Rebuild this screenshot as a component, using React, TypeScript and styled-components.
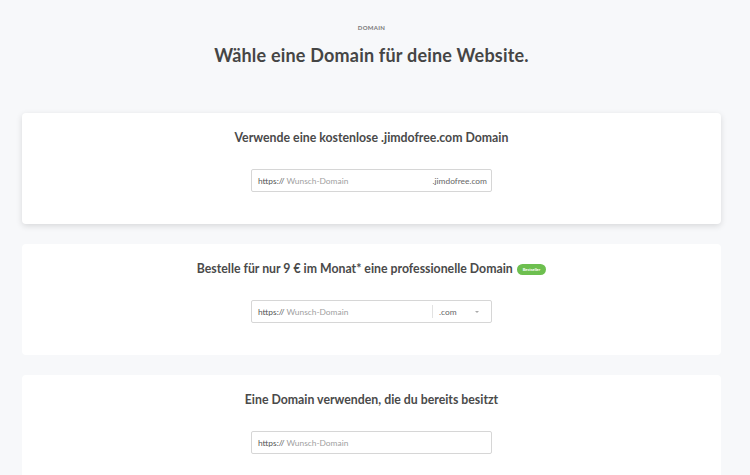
import styled, { createGlobalStyle } from 'styled-components';

const GlobalStyle = createGlobalStyle`
  html, body {
    margin: 0;
    padding: 0;
    background: #f7f8fa;
    font-family: Lato, "Open Sans", sans-serif;
    color: #4a4a4a;
  }
`;

const Page = styled.div`
  padding: 0 29px 0 22px;
  height: 475px;
  overflow: hidden;
`;

const Header = styled.header`
  display: flex;
  flex-direction: column;
  align-items: center;
  padding-top: 24px;
  margin-bottom: 46px;
`;

const Eyebrow = styled.div`
  font-size: 6px;
  font-weight: 700;
  letter-spacing: 0.3px;
  color: #777;
  line-height: 8px;
`;

const Title = styled.h1`
  margin: 11px 0 0;
  font-size: 18px;
  line-height: 24px;
  font-weight: 700;
  color: #454545;
  letter-spacing: 0.2px;
`;

const CardList = styled.div`
  display: flex;
  flex-direction: column;
  gap: 20px;
`;

const Card = styled.section<{ $raised?: boolean }>`
  background: #fff;
  border-radius: 4px;
  padding: 18px 0 32px;
  display: flex;
  flex-direction: column;
  align-items: center;
  box-shadow: ${p => (p.$raised ? '0 2px 6px rgba(0, 0, 0, 0.13)' : 'none')};
`;

const CardTitle = styled.h2`
  margin: 0 0 24px;
  font-size: 12.3px;
  line-height: 14px;
  font-weight: 700;
  color: #4a4a4a;
  display: flex;
  align-items: center;
  gap: 4px;
`;

const Badge = styled.span`
  background: #6dbf4f;
  color: #fff;
  font-size: 4px;
  font-weight: 700;
  border-radius: 6px;
  padding: 0 6px;
  height: 11px;
  line-height: 11px;
  display: inline-block;
`;

const Field = styled.div`
  width: 241px;
  height: 23px;
  box-sizing: border-box;
  border: 1px solid #d6d6d6;
  border-radius: 2px;
  display: flex;
  align-items: center;
  padding: 0 4px 0 6px;
  font-size: 8.4px;
`;

const Prefix = styled.span`
  color: #555;
`;

const Placeholder = styled.span`
  color: #a0a0a0;
  margin-left: 2px;
  flex: 1;
`;

const Suffix = styled.span`
  color: #666;
`;

const Select = styled.div`
  display: flex;
  align-items: center;
  border-left: 1px solid #e2e2e2;
  height: 13px;
  width: 55px;
  padding-left: 6px;
  color: #666;
  justify-content: space-between;
  padding-right: 8px;
  box-sizing: border-box;
`;

const Caret = styled.span`
  width: 0;
  height: 0;
  border-left: 2px solid transparent;
  border-right: 2px solid transparent;
  border-top: 2px solid #aaa;
`;

export default function App() {
  return (
    <>
      <GlobalStyle />
      <Page>
        <Header>
          <Eyebrow>DOMAIN</Eyebrow>
          <Title>Wähle eine Domain für deine Website.</Title>
        </Header>
        <CardList>
          <Card $raised>
            <CardTitle>Verwende eine kostenlose .jimdofree.com Domain</CardTitle>
            <Field>
              <Prefix>https://</Prefix>
              <Placeholder>Wunsch-Domain</Placeholder>
              <Suffix>.jimdofree.com</Suffix>
            </Field>
          </Card>
          <Card>
            <CardTitle>
              Bestelle für nur 9 € im Monat* eine professionelle Domain
              <Badge>Bestseller</Badge>
            </CardTitle>
            <Field>
              <Prefix>https://</Prefix>
              <Placeholder>Wunsch-Domain</Placeholder>
              <Select>
                <span>.com</span>
                <Caret />
              </Select>
            </Field>
          </Card>
          <Card>
            <CardTitle>Eine Domain verwenden, die du bereits besitzt</CardTitle>
            <Field>
              <Prefix>https://</Prefix>
              <Placeholder>Wunsch-Domain</Placeholder>
            </Field>
          </Card>
        </CardList>
      </Page>
    </>
  );
}
